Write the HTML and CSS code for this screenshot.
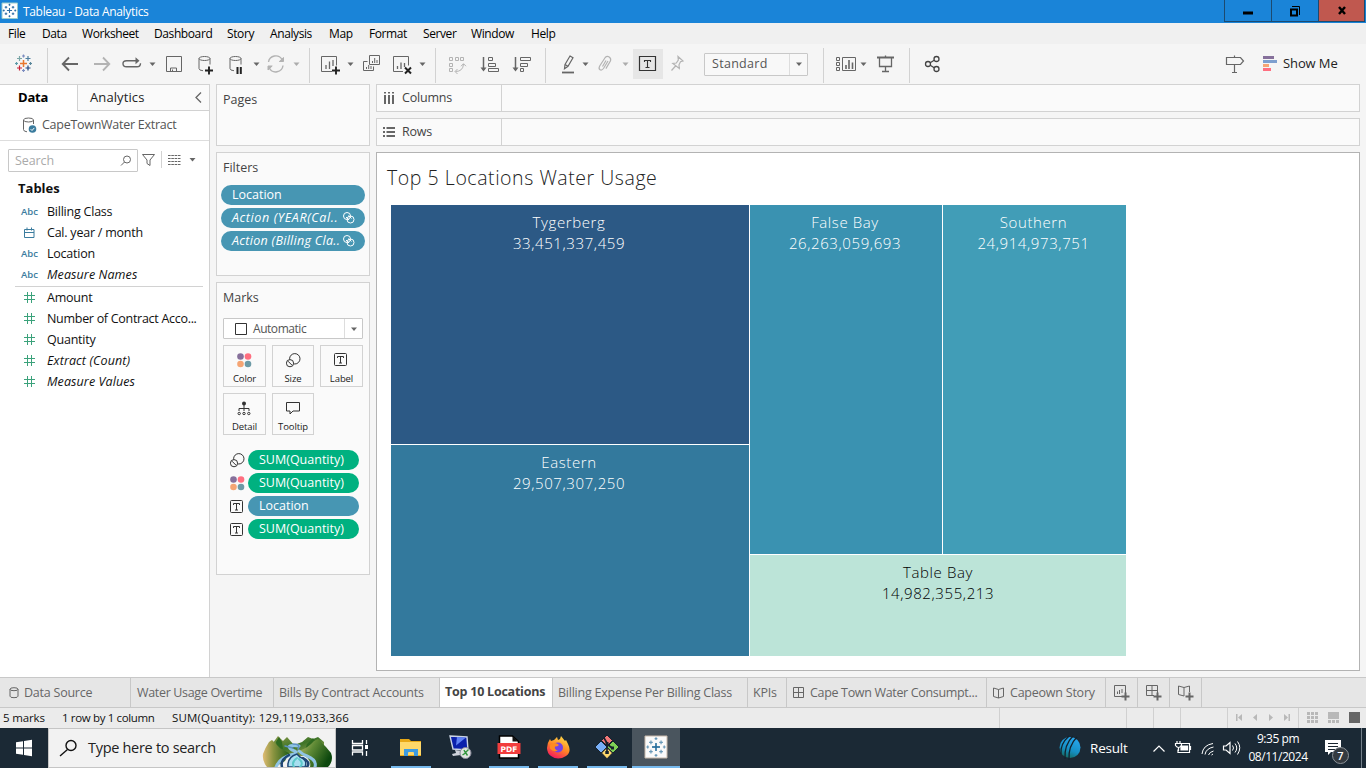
FILE: index.html
```html
<!DOCTYPE html>
<html lang="en">
<head>
<meta charset="utf-8">
<title>Tableau - Data Analytics</title>
<link rel="stylesheet" href="styles.css">
</head>
<body>
<svg class="defs" width="0" height="0">
  <defs>
    <g id="caret"><path d="M-3-1.5H3L0 2Z" fill="#666" stroke="none"/></g>
    <g id="size"><circle cx="8.8" cy="5.8" r="5.2"/><circle cx="4" cy="10.2" r="3.6" fill="#fafafa"/><path d="M2 8.200l4 4"/></g>
    <g id="color" stroke="none"><circle cx="3.500" cy="3.500" r="3.300" fill="#86709b"/><circle cx="11" cy="3.500" r="3.300" fill="#ff6f80"/><circle cx="3.500" cy="11" r="3.300" fill="#f5a574"/><circle cx="11" cy="11" r="3.300" fill="#6c9aa6"/></g>
    <g id="textmark"><rect x=".5" y=".5" width="12" height="12" rx="1"/><path d="M3.500 5V3.500h6V5M6.500 3.500V10M5 10h3"/></g>
    <g id="link"><circle cx="4" cy="4" r="3.500"/><circle cx="7.500" cy="7.500" r="3.500"/><path d="M3 5l3 3M5.500 3.500l3 3"/></g>
    <g id="hash"><path d="M3.500 0v11M7.500 0v11M0 3.500h11M0 7.500h11"/></g>
    <g id="snow"><path d="M-4 0h8M0-4v8M-5.500-7v4M-7.500-5h4M5.500-7v4M3.500-5h4M-5.500 3v4M-7.500 5h4M5.500 3v4M3.500 5h4M0-10.500v3M-1.500-9h3M0 7.500v3M-1.500 9h3M-9-1.500v3M-10.500 0h3M9-1.500v3M7.500 0h3"/></g>
  </defs>
</svg>

<header class="titlebar">
  <svg class="ic" width="23" height="23" viewBox="0 0 23 23"><path d="M2 3h15.500v15.500H2z" fill="#fff" stroke="#9cc"/><use href="#snow" transform="translate(9.500 10.500) scale(.64)" stroke="#2f6fa5" stroke-width="1.700"/></svg>
  <span class="app-title">Tableau - Data Analytics</span>
  <div class="winbtns">
    <span class="wb"><svg class="ic" width="12" height="12"><path d="M1 6.500h10v3H1z" fill="#000" stroke="none"/></svg></span>
    <span class="wb"><svg class="ic" width="12" height="12"><path d="M2 4.500h6v6H2z" stroke="#000" stroke-width="2"/><path d="M3 1.500h7.500V10" stroke="#000"/></svg></span>
    <span class="wb close"><svg class="ic" width="12" height="12"><path d="M3 2l6 7M9 2l-6 7" stroke="#000" stroke-width="2.400"/></svg></span>
  </div>
</header>

<nav class="menu"><span>File</span><span>Data</span><span>Worksheet</span><span>Dashboard</span><span>Story</span><span>Analysis</span><span>Map</span><span>Format</span><span>Server</span><span>Window</span><span>Help</span></nav>

<div class="toolbar">
  <svg class="ic" width="47" height="40" viewBox="0 44 47 40" stroke-width="1.200">
    <path d="M20 63.500h7M23.500 60v7" stroke="#e8762c" stroke-width="1.500"/>
    <path d="M17 58.500h5M19.500 56v5" stroke="#7aa5a6"/><path d="M25.500 58.500h5M28 56v5" stroke="#4f7fa0"/>
    <path d="M17 68h5M19.500 65.500v5" stroke="#c72035"/><path d="M25.500 68h5M28 65.500v5" stroke="#1f447e"/>
    <path d="M22 56h3M23.500 54.500v3M22 70.500h3M23.500 69v3" stroke="#7c8dc0"/><path d="M15 63.500h3M16.500 62v3" stroke="#5b9aa8"/><path d="M29 63.500h3M30.500 62v3" stroke="#59879b"/>
  </svg><i class="vr"></i>
  <svg class="ic" width="70" height="40" viewBox="48 44 70 40"><path d="M63 64h15M69 57.500L62.700 64l6.300 6.500" stroke-width="1.800"/><path d="M94 64h15M103 57.500l6.300 6.500-6.300 6.500" stroke="#b3b3b3" stroke-width="1.800"/></svg>
  <svg class="ic" width="42" height="40" viewBox="118 44 42 40"><path d="M136 60.700h-9.500q-3.500 0-3.500 3t3.500 3h10.500q3.500 0 3.500-3.500" stroke-width="1.400"/><path d="M135.500 57.200l4 3.500-4 3.500z" fill="#666" stroke="none"/><use href="#caret" x="152.500" y="64"/></svg>
  <svg class="ic" width="30" height="40" viewBox="160 44 30 40"><path d="M166.500 56.500h15v15h-15zM170.500 71.500v-3.500h6v3.500M172.500 69.500v2"/></svg>
  <svg class="ic" width="32" height="40" viewBox="190 44 32 40"><ellipse cx="204.500" cy="58.500" rx="5.500" ry="2"/><path d="M199 58.500v10q0 2 4 2.200M210 58.500v6"/><path d="M205 70.500h8M209 66.500v8" stroke="#222" stroke-width="1.900"/></svg>
  <svg class="ic" width="42" height="40" viewBox="222 44 42 40"><ellipse cx="235.500" cy="58.500" rx="5.500" ry="2"/><path d="M230 58.500v10q0 2 4 2.200M241 58.500v6"/><path d="M237.500 67v7M240.800 67v7" stroke="#222" stroke-width="2"/><use href="#caret" x="256.500" y="64"/></svg>
  <svg class="ic dim" width="45" height="40" viewBox="264 44 45 40"><path d="M268.500 62a7.300 7.300 0 0 1 13.500-2.500M283 65.500a7.300 7.300 0 0 1-13.700 2.500" stroke-width="1.400"/><path d="M283.500 57.500v4h-4.200zM268 70v-4h4.200z" fill="#b3b3b3"/><g opacity=".5"><use href="#caret" x="296.500" y="64"/></g></svg><i class="vr"></i>
  <svg class="ic" width="48" height="40" viewBox="310 44 48 40"><path d="M332 71.500h-10.500v-15h15v9"/><path d="M326 69v-4M329.500 69v-7.500M333 66v-6" stroke-width="1.300"/><path d="M332 70.500h8M336 66.500v8" stroke="#222" stroke-width="1.900"/><use href="#caret" x="350.500" y="64"/></svg>
  <svg class="ic" width="30" height="40" viewBox="358 44 30 40"><path d="M369.500 55.500h10v9h-10zM367.500 61.500h-4v9h10v-4"/><path d="M372.500 63v-2M374.700 63v-5M377 63v-3M366.500 69v-2M368.700 69v-4M371 69v-3"/></svg>
  <svg class="ic" width="47" height="40" viewBox="388 44 47 40"><path d="M403 71.500h-9.500v-15h15v9"/><path d="M397.500 69v-3M401 69v-6.500M404.500 67v-4" stroke-width="1.300"/><path d="M405 67.500l6 6M411 67.500l-6 6" stroke="#222" stroke-width="2"/><use href="#caret" x="422.500" y="64"/></svg><i class="vr"></i>
  <svg class="ic dim" width="37" height="40" viewBox="436 44 37 40"><path d="M449.500 57.500h3v3h-3zM455.500 57.500h3v3h-3zM460.500 57.500h3v3h-3zM449.500 63.500h3v3h-3zM449.500 68.500h3v3h-3zM455.500 71.500q7.500 0 8-7.500M457.500 69l-2.500 2.500 2.500 2.500M461 66.200l2.500-2.500 2.500 2.500"/></svg>
  <svg class="ic" width="33" height="40" viewBox="473 44 33 40"><path d="M483.500 57v13" stroke-width="1.500"/><path d="M480.500 67.500h6l-3 4z" fill="#666" stroke="none"/><path d="M488.500 57.500h4v3h-4zM488.500 63.500h7v3h-7zM488.500 68.500h10v3h-10z"/></svg>
  <svg class="ic" width="39" height="40" viewBox="506 44 39 40"><path d="M515.500 57v13" stroke-width="1.500"/><path d="M512.500 67.500h6l-3 4z" fill="#666" stroke="none"/><path d="M520.500 57.500h10v3h-10zM520.500 63.500h7v3h-7zM520.500 68.500h3v3h-3z"/></svg><i class="vr"></i>
  <svg class="ic" width="47" height="40" viewBox="546 44 47 40"><path d="M565 64.500l5-8.500 3 1.800-5 8.500-3.500 2.500zM565 64.500l3 1.800M570 56l3 1.800" stroke-width="1.200"/><path d="M562 72.500h12" stroke-width="1.800"/><use href="#caret" x="585.500" y="64"/></svg>
  <svg class="ic dim" width="40" height="40" viewBox="593 44 40 40"><path d="M608 61l-4.500 7.500q-1.800 2.300-3.500 1.200t-.3-3.700l5.500-8.500q1.800-2 4-.6t1.200 4.200l-4.500 7.500M606 60.500l-3.500 6" stroke-width="1.200"/><g opacity=".5"><use href="#caret" x="625.500" y="64"/></g></svg>
  <svg class="ic lbl" width="30" height="30" viewBox="633 49 30 30"><path d="M639.500 56.500h16v14h-16z" stroke="#333" stroke-width="1.200"/><path d="M644.500 62v-1.500h6V62M647.500 60.500v7M645.500 67.500h4" stroke="#333" stroke-width="1.100"/></svg>
  <svg class="ic dim" width="41" height="40" viewBox="663 44 41 40"><path d="M678 56.500l5 4.500-2.500.8-1.500 3 .3 3.700-6.500-5 3.500-.5 2-3zM676 65.500l-4.500 5" stroke-width="1.200"/></svg>
  <div class="select std"><span>Standard</span><b><svg class="ic" width="8" height="6" viewBox="-4 -3 8 6"><use href="#caret"/></svg></b></div>
  <svg class="ic" width="15" height="40"></svg><i class="vr"></i>
  <svg class="ic" width="47" height="40" viewBox="824 44 47 40"><path d="M836.500 57.500h3v3h-3zM836.500 62.500h3v3h-3zM836.500 67.500h3v3h-3zM842.500 57.500h13v13h-13z"/><path d="M846 69v-4M849 69v-9M852.500 69v-6.500" stroke-width="1.600"/><use href="#caret" x="863.500" y="64"/></svg>
  <svg class="ic" width="38" height="40" viewBox="871 44 38 40"><path d="M877 57.500h17" stroke-width="2"/><path d="M879.500 58v8.500h12V58M885.500 55.500v2M885.500 66.500v5M882 71.500h7" stroke-width="1.300"/></svg><i class="vr"></i>
  <svg class="ic" width="40" height="40" viewBox="910 44 40 40"><g stroke="#444" stroke-width="1.300"><circle cx="928" cy="64" r="2.500"/><circle cx="936.500" cy="59" r="2.500"/><circle cx="936.500" cy="69" r="2.500"/><path d="M930.200 62.700l4-2.400M930.200 65.300l4 2.400"/></g></svg>
  <svg class="ic push" width="64" height="40" viewBox="1218 44 64 40"><path d="M1226.500 57.500h14l3 3.500-3 3.500h-14zM1234.500 55.500v2M1234.500 64.500v7.500M1232 72.500h5" stroke-width="1.200"/><g stroke="none"><path d="M1263 56h11v3h-11z" fill="#86709b"/><path d="M1263 60h14v3h-14z" fill="#7d9fcf"/><path d="M1263 64h6v3h-6z" fill="#f5a574"/><path d="M1263 68h8v3h-8z" fill="#ff6f80"/></g></svg>
  <span class="showme">Show Me</span>
</div>

<main class="work">
  <aside class="data">
    <div class="tabs2"><b>Data</b><span>Analytics</span><svg class="ic" width="22" height="26"><path d="M14 7.500l-5 5 5 5" stroke-width="1.300"/></svg></div>
    <div class="source"><svg class="ic" width="16" height="18"><ellipse cx="7.500" cy="4" rx="5" ry="2"/><path d="M2.500 4v9.500q0 2 3.500 2.300M12.500 4v4"/><circle cx="11.500" cy="13" r="3.800" fill="#3b7c9e" stroke="none"/><path d="M9.700 13.200l1.300 1.300 2.300-2.600" stroke="#fff"/></svg><span>CapeTownWater Extract</span></div>
    <div class="searchrow">
      <div class="search"><span>Search</span><svg class="ic" width="12" height="12"><circle cx="7" cy="4.500" r="3.500"/><path d="M4.500 7L1 10.500"/></svg></div>
      <svg class="ic" width="62" height="24" viewBox="138 149 62 24"><path d="M142.500 154.500h12l-4.500 5.500v5.500l-3-2v-3.500z"/><path d="M161.500 151v17" stroke="#d2d2d2"/><path d="M168 155.500h12.500M168 158.500h12.500M168 161.500h12.500M168 164.500h12.500" stroke-dasharray="2.600 .7" stroke-width="1.200"/><use href="#caret" x="192.500" y="159.500" /></svg>
    </div>
    <h3>Tables</h3>
    <ul class="fields">
      <li><em class="abc">Abc</em>Billing Class</li>
      <li><em class="abc"><svg class="ic" width="11" height="11"><path d="M.5 2.500h9.500v8H.5zM.5 5.500H10M3 .5v3M7.500 .5v3" stroke="#3b7c9e"/></svg></em>Cal. year / month</li>
      <li><em class="abc">Abc</em>Location</li>
      <li class="it"><em class="abc">Abc</em>Measure Names</li>
    </ul>
    <ul class="fields meas">
      <li><em><svg class="ic grn" width="11" height="11"><use href="#hash"/></svg></em>Amount</li>
      <li class="long"><em><svg class="ic grn" width="11" height="11"><use href="#hash"/></svg></em>Number of Contract Acco...</li>
      <li><em><svg class="ic grn" width="11" height="11"><use href="#hash"/></svg></em>Quantity</li>
      <li class="it"><em><svg class="ic grn" width="11" height="11"><use href="#hash"/></svg></em>Extract (Count)</li>
      <li class="it"><em><svg class="ic grn" width="11" height="11"><use href="#hash"/></svg></em>Measure Values</li>
    </ul>
  </aside>

  <section class="cards">
    <div class="card pages"><h4>Pages</h4></div>
    <div class="card filters"><h4>Filters</h4>
      <div class="pill">Location</div>
      <div class="pill i"><span class="year">Action (YEAR(Cal..</span><svg class="ic" width="12" height="12"><use href="#link" stroke="#fff"/></svg></div>
      <div class="pill i"><span>Action (Billing Cla..</span><svg class="ic" width="12" height="12"><use href="#link" stroke="#fff"/></svg></div>
    </div>
    <div class="card marks"><h4>Marks</h4>
      <div class="select auto"><svg class="ic" width="12" height="12"><path d="M.5.500h11v11H.5z" stroke="#333"/></svg><span>Automatic</span><b><svg class="ic" width="8" height="6" viewBox="-4 -3 8 6"><use href="#caret"/></svg></b></div>
      <div class="btns">
        <div><svg class="ic" width="15" height="15"><use href="#color"/></svg>Color</div>
        <div><svg class="ic dk" width="15" height="15"><use href="#size"/></svg>Size</div>
        <div><svg class="ic dk" width="15" height="15"><use href="#textmark"/></svg>Label</div>
        <div><svg class="ic dk" width="15" height="15"><g transform="translate(.5)"><circle cx="6.500" cy="2.500" r="2" fill="#333" stroke="none"/><path d="M6.500 4v6M1.500 10V7.500h10V10"/><circle cx="1.700" cy="12.500" r="1.200"/><circle cx="6.500" cy="12.500" r="1.200"/><circle cx="11.300" cy="12.500" r="1.200"/></g></svg>Detail</div>
        <div><svg class="ic dk" width="15" height="15"><path d="M.5 1.500h13v8.500H7l-3 3v-3H.5z"/></svg>Tooltip</div>
      </div>
      <div class="enc"><svg class="ic dk" width="15" height="15"><use href="#size"/></svg><div class="pill g">SUM(Quantity)</div></div>
      <div class="enc"><svg class="ic" width="15" height="15"><use href="#color"/></svg><div class="pill g">SUM(Quantity)</div></div>
      <div class="enc"><svg class="ic dk" width="15" height="13"><use href="#textmark"/></svg><div class="pill">Location</div></div>
      <div class="enc"><svg class="ic dk" width="15" height="13"><use href="#textmark"/></svg><div class="pill g">SUM(Quantity)</div></div>
    </div>
  </section>

  <section class="sheet">
    <div class="shelf"><div><svg class="ic" width="12" height="14"><path d="M2 1v1.500M6 1v1.500M10 1v1.500M2 4v9M6 4v9M10 4v9" stroke-width="2"/></svg>Columns</div></div>
    <div class="shelf"><div><svg class="ic" width="12" height="12"><path d="M0 2h2M0 6h2M0 10h2M3.500 2H12M3.500 6H12M3.500 10H12" stroke-width="2"/></svg>Rows</div></div>
    <div class="view">
      <h1>Top 5 Locations Water Usage</h1>
      <div class="treemap">
        <div class="tm a"><span>Tygerberg</span><span>33,451,337,459</span></div>
        <div class="tm b"><span>False Bay</span><span>26,263,059,693</span></div>
        <div class="tm c"><span>Southern</span><span>24,914,973,751</span></div>
        <div class="tm d"><span>Eastern</span><span>29,507,307,250</span></div>
        <div class="tm e"><span>Table Bay</span><span>14,982,355,213</span></div>
      </div>
    </div>
  </section>
</main>

<div class="sheets">
  <div><svg class="ic" width="10" height="12"><ellipse cx="5" cy="2.200" rx="4" ry="1.500"/><path d="M1 2.200v7q0 1.500 4 1.500t4-1.500v-7"/></svg><span>Data Source</span></div>
  <div><span class="tight">Water Usage Overtime</span></div>
  <div><span>Bills By Contract Accounts</span></div>
  <div class="on"><span>Top 10 Locations</span></div>
  <div><span>Billing Expense Per Billing Class</span></div>
  <div><span>KPIs</span></div>
  <div><svg class="ic" width="12" height="12"><path d="M.5.500h10v10H.5zM5.500.500v10M.5 5.500h10"/></svg><span class="tight">Cape Town Water Consumpt...</span></div>
  <div><svg class="ic" width="12" height="12"><path d="M.5 1l5 1.500 5-1.500v8.500l-5 1.500-5-1.500zM5.500 2.500V11"/></svg><span>Capeown Story</span></div>
  <div class="new"><svg class="ic" width="16" height="16"><path d="M8 11.500H.5V.5h11V8M3.500 9V6.500M5.500 9V5M8 8V4"/><path d="M7.500 11.500h8M11.500 7.500v8" stroke-width="2"/></svg></div>
  <div class="new"><svg class="ic" width="16" height="16"><path d="M8 10.500H.5V.5h11V8M6 .5v10M.5 5.500h11"/><path d="M7.500 11.500h8M11.500 7.500v8" stroke-width="2"/></svg></div>
  <div class="new"><svg class="ic" width="16" height="16"><path d="M11.500 7V1l-5.500 1.500L.5 1v8.500L6 11M6 2.500V11"/><path d="M7.500 11.500h8M11.500 7.500v8" stroke-width="2"/></svg></div>
</div>

<div class="status">
  <span class="s1">5 marks</span><span class="s2">1 row by 1 column</span><span class="s3">SUM(Quantity): 129,119,033,366</span>
  <svg class="ic push" width="367" height="20" viewBox="999 708 367 20">
    <path d="M999.500 708v20M1126.500 708v20M1153.500 708v20M1180.500 708v20M1227.500 708v20M1298.500 708v20" stroke="#d0d0d0"/>
    <g fill="#b8b8b8" stroke="none"><path d="M1236 714h1.500v7h-1.500zM1242 714v7l-4-3.500zM1257 714v7l-4-3.500zM1269 714v7l4-3.500zM1284 714v7l4-3.500zM1288.500 714h1.500v7h-1.500z"/>
    <path d="M1307 712h3v3h-3zM1311 712h3v3h-3zM1315 712h3v3h-3zM1307 716h3v3h-3zM1311 716h3v3h-3zM1315 716h3v3h-3zM1307 720h3v3h-3zM1311 720h3v3h-3zM1315 720h3v3h-3zM1328 712h11v7h-11zM1328 720h3v3h-3zM1332 720h3v3h-3zM1336 720h3v3h-3z"/></g>
    <path d="M1349 712h11v11h-11z" fill="#666" stroke="none"/>
  </svg>
</div>

<footer class="taskbar">
  <svg class="ic" width="48" height="40"><path d="M16 14.200l7-1v6.300h-7zM24 13l8-1.200v7.700h-8zM16 20.500h7v6.300l-7-1zM24 20.500h8v7.700l-8-1.200z" fill="#fff" stroke="none"/></svg>
  <div class="tsearch">
    <svg class="ic" width="39" height="38" viewBox="49 729 39 38"><circle cx="71" cy="745.500" r="5" stroke="#111" stroke-width="1.400"/><path d="M67.500 749.500L60 756" stroke="#111" stroke-width="1.400"/></svg>
    <span>Type here to search</span>
    <svg class="ic push" width="79" height="38" viewBox="256 729 79 38">
      <defs>
        <linearGradient id="hl"><stop offset="0" stop-color="#e0bc74"/><stop offset=".4" stop-color="#8a9440"/><stop offset="1" stop-color="#245f18"/></linearGradient>
        <linearGradient id="hr" x2="1" y2=".5"><stop offset="0" stop-color="#c9c47a"/><stop offset=".45" stop-color="#5f8a35"/><stop offset="1" stop-color="#0d480e"/></linearGradient>
        <linearGradient id="hb" x2=".9" y2="1"><stop offset="0" stop-color="#8f9c4a"/><stop offset=".5" stop-color="#3e7428"/><stop offset="1" stop-color="#a9ab58"/></linearGradient>
      </defs>
      <g stroke="none">
        <path d="M270 747l8-11 5 5 4-4 7 8 8-3 6-5 5 2 5-2 6 5v14h-52z" fill="url(#hb)"/>
        <path d="M307 744l6-6 4 5-4 7h-8zM276 742l3-5 3 5 1 7-6-1z" fill="#2f6a20"/>
        <path d="M267 767q-5-6-4-13 2-6 6-12l3-2 9 9 8 4-4 8-10 6z" fill="url(#hl)"/>
        <path d="M299 751q9-3 15-10l4-2 8 8 5 6q3 8-3 14h-18q2-9-11-14z" fill="url(#hr)"/>
      </g>
      <g fill="none" stroke-linecap="round">
        <path d="M299 746q-15-2-7 4 7 2 2 4-14 3-18 13M299 751q3 3 8 5 10 4 8 11" stroke="#8fc4e4" stroke-width="3"/>
        <path d="M297 754q-10 3-9 13h17q3-7-5-10z" fill="#a8dff0" stroke="#1e4674" stroke-width="1.500"/>
        <path d="M289 755q-9 5-7 12M303 758q8 4 4 9" stroke="#1e4674" stroke-width="2.500"/>
        <path d="M297 758q-6 4-3 9M299 759q5 4 1 8" stroke="#5cc8c9" stroke-width="2"/>
        <path d="M285 746l8 2M293 744q8 0 5 5" stroke="#5f91c5" stroke-width="1.500"/>
      </g>
    </svg>
  </div>
  <svg class="ic" width="51" height="40" viewBox="336 728 51 40"><path d="M352.500 740v3.500h10V740M352.500 755.500V752h10v3.500M352.500 745.500h10v4.500h-10zM366.500 740v4M366.500 751v5" stroke="#fff" stroke-width="1.300"/><path d="M365 745h3v4h-3z" fill="#fff" stroke="none"/></svg>
  <div class="app run"><svg class="ic" width="24" height="24"><g stroke="none"><path d="M1 4h9l2 2h10v15H1z" fill="#e8a816"/><path d="M1 7h21v13H1z" fill="#ffd869"/><path d="M5 21v-7h14v7h-4v-3q0-1-1-1h-4q-1 0-1 1v3z" fill="#3d9be0"/></g></svg></div>
  <div class="app"><svg class="ic" width="24" height="24"><path d="M2 1l17 1 1 13-15-1z" fill="#0b21ac" stroke="#cbd4e4" stroke-width="1.400"/><path d="M9 2l9 .5-10 8z" fill="#5f82f5" stroke="none"/><path d="M7 15l7 1-1 4-8 1-1-2 4-1z" fill="#cfd3dc" stroke="none"/><circle cx="17.500" cy="18" r="5.500" fill="#dfe3df" stroke="#889"/><path d="M14.500 20l3-2-1.500-3M20.500 14.500l-3 3 2 3" stroke="#32953d" stroke-width="1.400"/></svg></div>
  <div class="app run"><svg class="ic" width="24" height="24"><path d="M2.500 1h13l6 5.500V23h-19z" fill="#fff" stroke="#000" stroke-width="1.500"/><path d="M15.500 1v5.500H21z" fill="#111" stroke="none"/><path d="M.500 8h23v11h-23z" fill="#f23d3d" stroke="none"/><text x="12" y="16.500" text-anchor="middle" class="pdf">PDF</text></svg></div>
  <div class="app run"><svg class="ic" width="24" height="24"><defs><linearGradient id="ff" x1=".8" y1="0" x2=".3" y2="1"><stop offset="0" stop-color="#ffe14a"/><stop offset=".5" stop-color="#ff8a24"/><stop offset="1" stop-color="#f4145f"/></linearGradient></defs><path d="M1 13q0-5 3-9l1 2 3-1 3-3 1 3 2-1 1-3 4 5 1-1 2 4q4 8-2 12-8 5-15 0-4-3-4-8z" fill="url(#ff)" stroke="none"/><circle cx="12" cy="12.500" r="5" fill="#7542e5" stroke="none"/><path d="M4 10q5-4 9 0-2 2-4 1.500-1 3 3 4-5 2-8-2z" fill="#ff8b20" stroke="none"/></svg></div>
  <div class="app run"><svg class="ic" width="24" height="24"><g stroke="#17222d" stroke-width="1"><path d="M12 0l5.500 5.500L12 11 6.500 5.500z" fill="#f27878"/><path d="M18 6l6 6-6 6-6-6z" fill="#7fd055"/><path d="M6 6l6 6-6 6-6-6z" fill="#78aff7"/><path d="M12 12.500l5.500 5.500-5.500 5.800L6.500 18z" fill="#ffd96d"/></g><path d="M9 3l3 5v9M12 9l5 4" stroke="#17222d" stroke-width="1.700"/><path d="M10.300 16h3.500v3h-3.500zM10.500 7h3v3h-3zM16 11.500h3v3h-3z" fill="#17222d" stroke="none"/></svg></div>
  <div class="app cur"><svg class="ic" width="24" height="24"><path d="M1 1h22v22H1z" fill="#fafafa" stroke="#c8b9aa"/><use href="#snow" transform="translate(12 12) scale(.92)" stroke="#6999b8" stroke-width="1.300"/><path d="M8 12h8M12 8v8" stroke="#236c9b" stroke-width="1.300"/></svg></div>
  <svg class="ic push" width="32" height="40" viewBox="1058 728 32 40"><defs><linearGradient id="globe" x1=".7" y1="0" x2=".3" y2="1"><stop offset="0" stop-color="#28a8f0"/><stop offset=".6" stop-color="#168fc4"/><stop offset="1" stop-color="#136a5e"/></linearGradient></defs><circle cx="1070" cy="747.500" r="10.500" fill="url(#globe)" stroke="none"/><path d="M1073 736q-9 9-8 23M1077 737q-9 9-8 23M1069 736q-9 8-8 18" stroke="#14222d" stroke-width="1.300"/></svg>
  <span class="result">Result</span>
  <svg class="ic tray" width="92" height="40" viewBox="1152 728 92 40"><g stroke="#fff" stroke-width="1.200"><path d="M1153.500 751.500l5.500-5.500 5.500 5.500"/><path d="M1182 743.500h7.500v9H1178v-3"/><path d="M1181 746h6.500v4h-6.500z" fill="#fff"/><path d="M1190.500 746v4M1177 741v2.500M1180 741v2.500M1175.500 743.500h6v2q-3 4-6 0zM1178.500 748v3"/><g stroke-width="1"><path d="M1202 754q1-9 11-10.500M1205 754.500q1-6 8.500-7.500M1208.500 755q1-3 5-4M1211.500 755l1.500-1"/></g><path d="M1223.500 746h2.500l4-3.500v11l-4-3.500h-2.500z"/><path d="M1232.500 745.500q2 2.500 0 5M1235 743.500q3.500 4.500 0 9M1237.500 741.500q4.500 6 0 13" stroke-width="1"/></g></svg>
  <div class="clock"><span>9:35 pm</span><span>08/11/2024</span></div>
  <svg class="ic" width="54" height="40" viewBox="1312 728 54 40"><path d="M1325 740h16v12h-10l-3 3v-3h-3z" fill="#fff" stroke="none"/><path d="M1328 743.500h10M1328 746.500h10M1328 749.500h7" stroke="#1a2530"/><circle cx="1340.500" cy="755.500" r="8" fill="#343a40" stroke="#8d9399"/><text x="1340.500" y="759.500" text-anchor="middle" class="num">7</text><path d="M1361.500 728v40" stroke="#74808a"/></svg>
</footer>
</body>
</html>
```
FILE: styles.css
```css
* { box-sizing: border-box; }
body { margin: 0; width: 1366px; height: 768px; overflow: hidden; background: #f5f5f5; font: 12.5px/16px "Open Sans", "Noto Sans", sans-serif; color: #333; display: flex; flex-direction: column; }
h1, h3, h4, ul { margin: 0; padding: 0; font-weight: 400; }
span, li, h1, h3, h4 { white-space: nowrap; }
.defs { position: absolute; }
.ic { display: block; flex: none; fill: none; stroke: #666; }
.dim { stroke: #b3b3b3; }
.dk { stroke: #333; }
.grn { stroke: #3ba27b; }
.push { margin-left: auto; }

.titlebar { height: 23px; flex: none; display: flex; background: #1a84d8; color: #fff; font-size: 12px; line-height: 23px; }
.app-title { letter-spacing: -.33px; }
.winbtns { margin-left: auto; margin-right: 1px; display: flex; height: 22px; border: 1px solid #1c4a70; border-top: 0; }
.wb { width: 47px; display: flex; align-items: center; justify-content: center; border-right: 1px solid #1c4a70; }
.wb.close { background: #c0584f; border: 0; width: 45px; }

.menu { height: 21px; flex: none; display: grid; grid-template-columns: 34px 40px 72px 73px 43px 59px 40px 54px 48px 60px 60px; padding-left: 8px; background: #f0f0f0; color: #000; font-size: 12px; line-height: 21px; letter-spacing: -.4px; }

.toolbar { height: 40px; flex: none; display: flex; align-items: center; }
.vr { width: 1px; height: 35px; margin-top: 3px; background: #d2d2d2; flex: none; }
.lbl { background: #e6e6e6; }
.select { display: flex; align-items: center; background: #fff; border: 1px solid #c8c8c8; border-radius: 1px; color: #555; }
.select b { margin-left: auto; width: 18px; height: 100%; border-left: 1px solid #ddd; display: flex; align-items: center; justify-content: center; }
.std { width: 104px; height: 23px; padding-left: 7px; background: #f8f8f8; letter-spacing: .3px; }
.showme { width: 84px; padding: 0 0 2px 1px; color: #222; font-size: 13px; letter-spacing: -.1px; }

.work { height: 593px; flex: none; display: flex; }
.data { width: 210px; background: #fff; border-right: 1px solid #d2d2d2; border-top: 1px solid #d2d2d2; }
.tabs2 { height: 26px; display: flex; line-height: 25px; color: #222; font-size: 13px; }
.tabs2 b { width: 77px; padding-left: 18px; font-weight: 700; color: #000; letter-spacing: -.2px; }
.tabs2 span { flex: 1; padding-left: 12px; border-left: 1px solid #d2d2d2; border-bottom: 1px solid #d2d2d2; background: #fafafa; letter-spacing: .1px; }
.tabs2 svg { border-bottom: 1px solid #d2d2d2; background: #fafafa; }
.source { height: 30px; display: flex; align-items: center; gap: 5px; padding: 0 0 2px 21px; border-bottom: 1px solid #ddd; color: #555; letter-spacing: -.27px; }
.searchrow { display: flex; margin-top: 8px; padding-left: 8px; height: 24px; }
.search { width: 130px; height: 23px; display: flex; align-items: center; justify-content: space-between; padding: 0 5px 0 6px; border: 1px solid #c8c8c8; border-radius: 1px; color: #aaa; letter-spacing: -.1px; }
h3 { margin: 5px 0 3px 18px; height: 20px; line-height: 20px; font-size: 13px; font-weight: 700; color: #111; }
.fields { list-style: none; color: #111; }
.fields li { height: 21px; line-height: 20px; display: flex; align-items: center; letter-spacing: -.23px; }
.fields em { width: 25px; flex: none; margin: 0 1px 0 21px; display: flex; align-items: center; font-style: normal; letter-spacing: 0; }
.fields em svg { margin-left: 3px; }
.abc { color: #3b7c9e; font-size: 9.5px; font-weight: 600; }
.fields .it { font-style: italic; letter-spacing: .1px; }
.fields .long { letter-spacing: -.29px; }
.meas { margin: 1px 6px 0 15px; border-top: 1px solid #d2d2d2; }
.meas em { margin-left: 6px; }

.cards { width: 154px; margin-left: 6px; display: flex; flex-direction: column; gap: 6px; }
.card { background: #fafafa; border: 1px solid #d2d2d2; }
h4 { padding: 7px 0 0 6px; line-height: 16px; color: #444; }
.pages { height: 62px; }
.filters { height: 124px; }
.marks { height: 293px; }
.pill { height: 20px; border-radius: 10px; background: #4796b3; color: #fff; padding: 0 11px 1px; line-height: 18px; display: flex; align-items: center; justify-content: space-between; font-weight: 500; }
.filters .pill { margin: 0 4px 3px; }
.filters h4 + .pill { margin-top: 9px; }
.pill.i { font-style: italic; letter-spacing: .3px; padding-right: 10px; }
.pill.i .year { letter-spacing: .6px; }
.pill.g { background: #00b180; }
.auto { margin: 12px 6px 6px; height: 21px; background: #fff; padding-left: 11px; gap: 6px; font-size: 12px; letter-spacing: -.45px; }
.btns { display: grid; grid-template-columns: 43px 42px 43px; gap: 6px; padding-left: 6px; margin-bottom: 15px; }
.btns div { height: 42px; border: 1px solid #d2d2d2; display: flex; flex-direction: column; align-items: center; padding-top: 7px; font-size: 9.5px; line-height: 12px; gap: 5px; color: #222; letter-spacing: -.1px; }
.enc { display: flex; align-items: center; height: 20px; margin: 0 10px 3px 13px; gap: 3px; }
.enc .pill { width: 111px; }

.sheet { margin-left: 6px; width: 984px; }
.shelf { height: 28px; margin-bottom: 6px; background: #fafafa; border: 1px solid #d2d2d2; }
.shelf div { width: 125px; height: 26px; border-right: 1px solid #d2d2d2; display: flex; align-items: center; padding-left: 6px; gap: 7px; color: #444; letter-spacing: -.2px; }
.view { height: 519px; background: #fff; border: 1px solid #b3b3b3; padding: 12px 0 0 14px; }
h1 { font-weight: 300; font-size: 19.5px; line-height: 26px; height: 40px; margin-left: -4px; letter-spacing: .55px; color: #222; }
.treemap { width: 735px; height: 451px; display: grid; grid-template: 239px 109px 101px / 358px 192px 183px; gap: 1px; }
.tm { display: flex; flex-direction: column; align-items: center; padding: 7px 2px 0 0; line-height: 21px; font-size: 15px; font-weight: 300; letter-spacing: .6px; color: #fff; }
.a { grid-area: 1 / 1; background: #2c5985; }
.b { grid-area: 1 / 2 / 3 / 3; background: #3a92b1; }
.c { grid-area: 1 / 3 / 3 / 4; background: #419db7; }
.d { grid-area: 2 / 1 / 4 / 2; background: #33799d; }
.e { grid-area: 3 / 2 / 4 / 4; background: #bce4d8; color: #000; padding-right: 0; }

.sheets { height: 31px; flex: none; display: grid; grid-template-columns: 131px 143px 166px 113px 195px 39px 200px 119px 32px 32px 32px; background: #e6e6e6; border-top: 1px solid #c8c8c8; border-bottom: 1px solid #c8c8c8; color: #666; letter-spacing: -.23px; }
.sheets div { border-right: 1px solid #c8c8c8; padding-left: 5px; display: flex; align-items: center; gap: 5px; }
.sheets div:nth-child(2), .sheets div:nth-child(7), .sheets div:nth-child(8) { padding-left: 6px; }
.sheets div:first-child { padding-left: 9px; }
.sheets .tight { letter-spacing: -.33px; }
.sheets .on { background: #fff; font-weight: 700; color: #444; padding-bottom: 2px; }
.sheets .new { padding-left: 8px; }
.status { height: 20px; flex: none; display: flex; background: #ebebeb; line-height: 20px; font-size: 11.5px; color: #111; padding-left: 3px; }
.s1 { width: 59px; letter-spacing: -.15px; }
.s2 { width: 110px; letter-spacing: -.35px; }
.s3 { letter-spacing: .17px; }

.taskbar { height: 40px; flex: none; display: flex; background: #1b2935; color: #fff; }
.tsearch { width: 288px; background: #f2f2f2; border: 1px solid #c5c5c5; display: flex; align-items: center; color: #222; font-size: 14.5px; letter-spacing: -.3px; }
.app { width: 48px; margin-right: 1px; height: 40px; padding-top: 7px; display: flex; justify-content: center; }
.run { background: linear-gradient(#76b9ed, #76b9ed) center bottom / 40px 2px no-repeat; }
.cur { background: #4a555e; box-shadow: inset 0 -2px #76b9ed; }
.pdf { font: 700 7.5px "DejaVu Sans", sans-serif; fill: #fff; stroke: none; }
.num { font: 600 11px "Open Sans", sans-serif; fill: #fff; stroke: none; }
.result { width: 62px; line-height: 40px; font-size: 13.5px; letter-spacing: -.2px; }
.clock { width: 68px; display: flex; flex-direction: column; align-items: center; font-size: 12px; line-height: 18px; padding-top: 2px; letter-spacing: -.45px; }
```
